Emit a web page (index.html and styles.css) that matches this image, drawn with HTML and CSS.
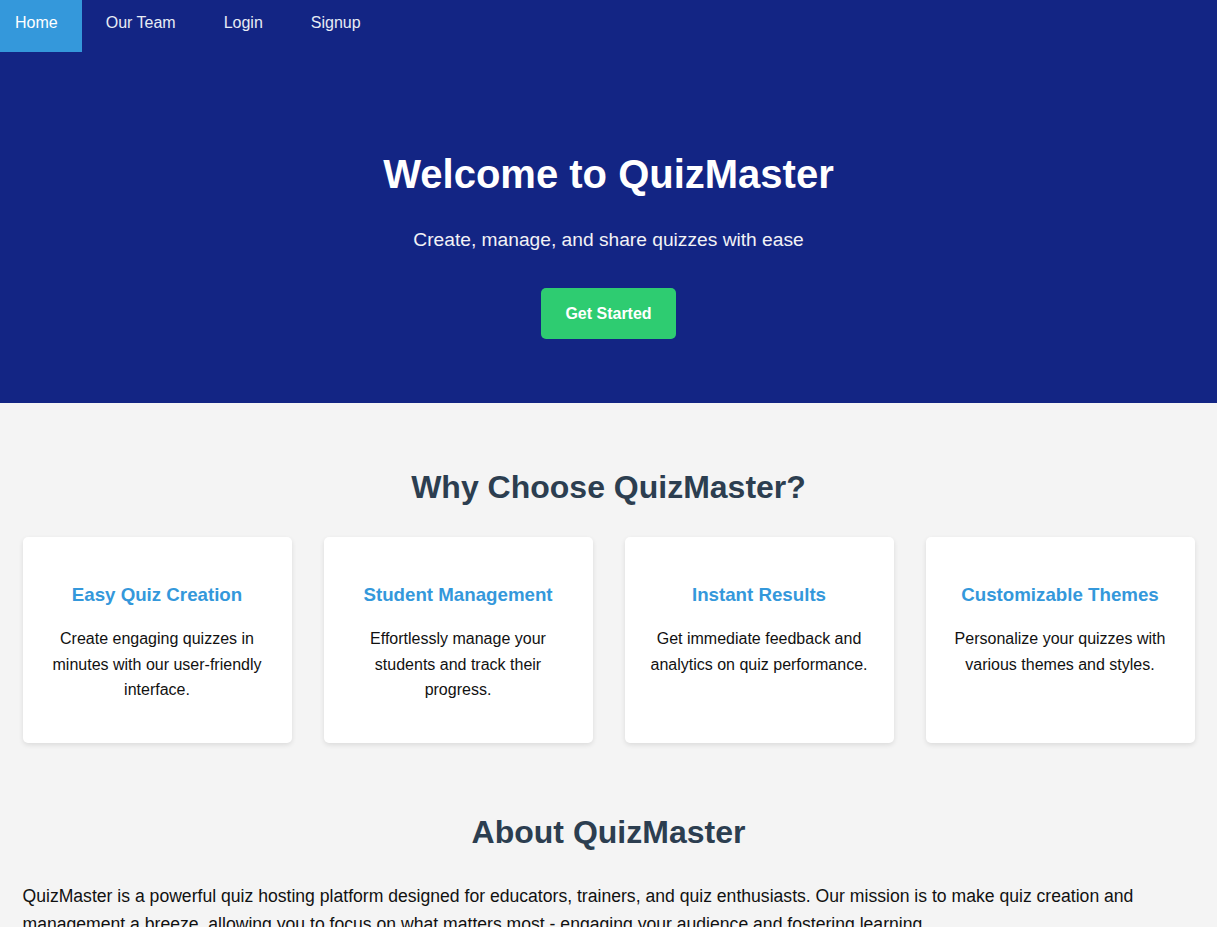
FILE: index.html
```html
<!DOCTYPE html>
<html lang="en">
<head>
<meta charset="utf-8">
<title>QuizMaster</title>
<link rel="stylesheet" href="styles.css">
</head>
<body>
<nav class="nav">
  <a class="nav-link active" href="#">Home</a>
  <a class="nav-link" href="#">Our Team</a>
  <a class="nav-link" href="#">Login</a>
  <a class="nav-link" href="#">Signup</a>
</nav>
<header class="hero">
  <h1 class="hero-title">Welcome to QuizMaster</h1>
  <p class="hero-sub">Create, manage, and share quizzes with ease</p>
  <a class="btn" href="#">Get Started</a>
</header>
<main class="main">
  <section class="features">
    <h2 class="section-title">Why Choose QuizMaster?</h2>
    <div class="cards">
      <div class="card">
        <h3 class="card-title">Easy Quiz Creation</h3>
        <p class="card-text">Create engaging quizzes in minutes with our user-friendly interface.</p>
      </div>
      <div class="card">
        <h3 class="card-title">Student Management</h3>
        <p class="card-text">Effortlessly manage your students and track their progress.</p>
      </div>
      <div class="card">
        <h3 class="card-title">Instant Results</h3>
        <p class="card-text">Get immediate feedback and analytics on quiz performance.</p>
      </div>
      <div class="card">
        <h3 class="card-title">Customizable Themes</h3>
        <p class="card-text">Personalize your quizzes with various themes and styles.</p>
      </div>
    </div>
  </section>
  <section class="about">
    <h2 class="section-title">About QuizMaster</h2>
    <p class="about-text">QuizMaster is a powerful quiz hosting platform designed for educators, trainers, and quiz enthusiasts. Our mission is to make quiz creation and management a breeze, allowing you to focus on what matters most - engaging your audience and fostering learning.</p>
  </section>
</main>
</body>
</html>
```
FILE: styles.css
```css
* { box-sizing: border-box; }
html, body { margin: 0; padding: 0; }
body {
  font-family: "Liberation Sans", Arial, sans-serif;
  background: #f4f4f4;
  color: #111;
  line-height: 1.6;
}
.nav {
  display: flex;
  gap: 9px;
  height: 52px;
  background: #132584;
}
.nav-link {
  display: block;
  height: 52px;
  padding: 14px 24px 0 15px;
  color: #e8ecf4;
  text-decoration: none;
  font-size: 16px;
  line-height: 18px;
}
.nav-link.active { background: #3498db; color: #fff; }
.hero {
  background: #132584;
  color: #fff;
  text-align: center;
  padding: 99px 20px 64px;
}
.hero-title {
  margin: 0;
  font-size: 40px;
  line-height: 46px;
  font-weight: bold;
}
.hero-sub {
  margin: 28px 0 33px;
  font-size: 19.2px;
  line-height: 30px;
  color: #f2f2f6;
}
.btn {
  display: inline-block;
  background: #2ecc71;
  color: #fff;
  font-weight: bold;
  font-size: 16px;
  line-height: 25.6px;
  padding: 12.8px 24px;
  border-radius: 5px;
  text-decoration: none;
}
.main { padding: 0 22.5px; }
.features { padding-top: 61px; }
.section-title {
  margin: 0;
  text-align: center;
  font-size: 32px;
  line-height: 46px;
  color: #2c3e50;
}
.cards {
  display: grid;
  grid-template-columns: repeat(4, 1fr);
  gap: 32px;
  margin-top: 27px;
}
.card {
  background: #fff;
  border-radius: 5px;
  box-shadow: 0 2px 5px rgba(0,0,0,0.1);
  padding: 26px 25px 24px;
  text-align: center;
}
.card-title {
  margin: 21px 0 20px;
  font-size: 18.72px;
  line-height: 22px;
  color: #3498db;
}
.card-text {
  margin: 0 0 16px;
  font-size: 16px;
  line-height: 25.6px;
}
.about { padding-top: 66px; }
.about-text {
  margin: 27px 0 0;
  font-size: 17.6px;
  line-height: 28px;
}
```
